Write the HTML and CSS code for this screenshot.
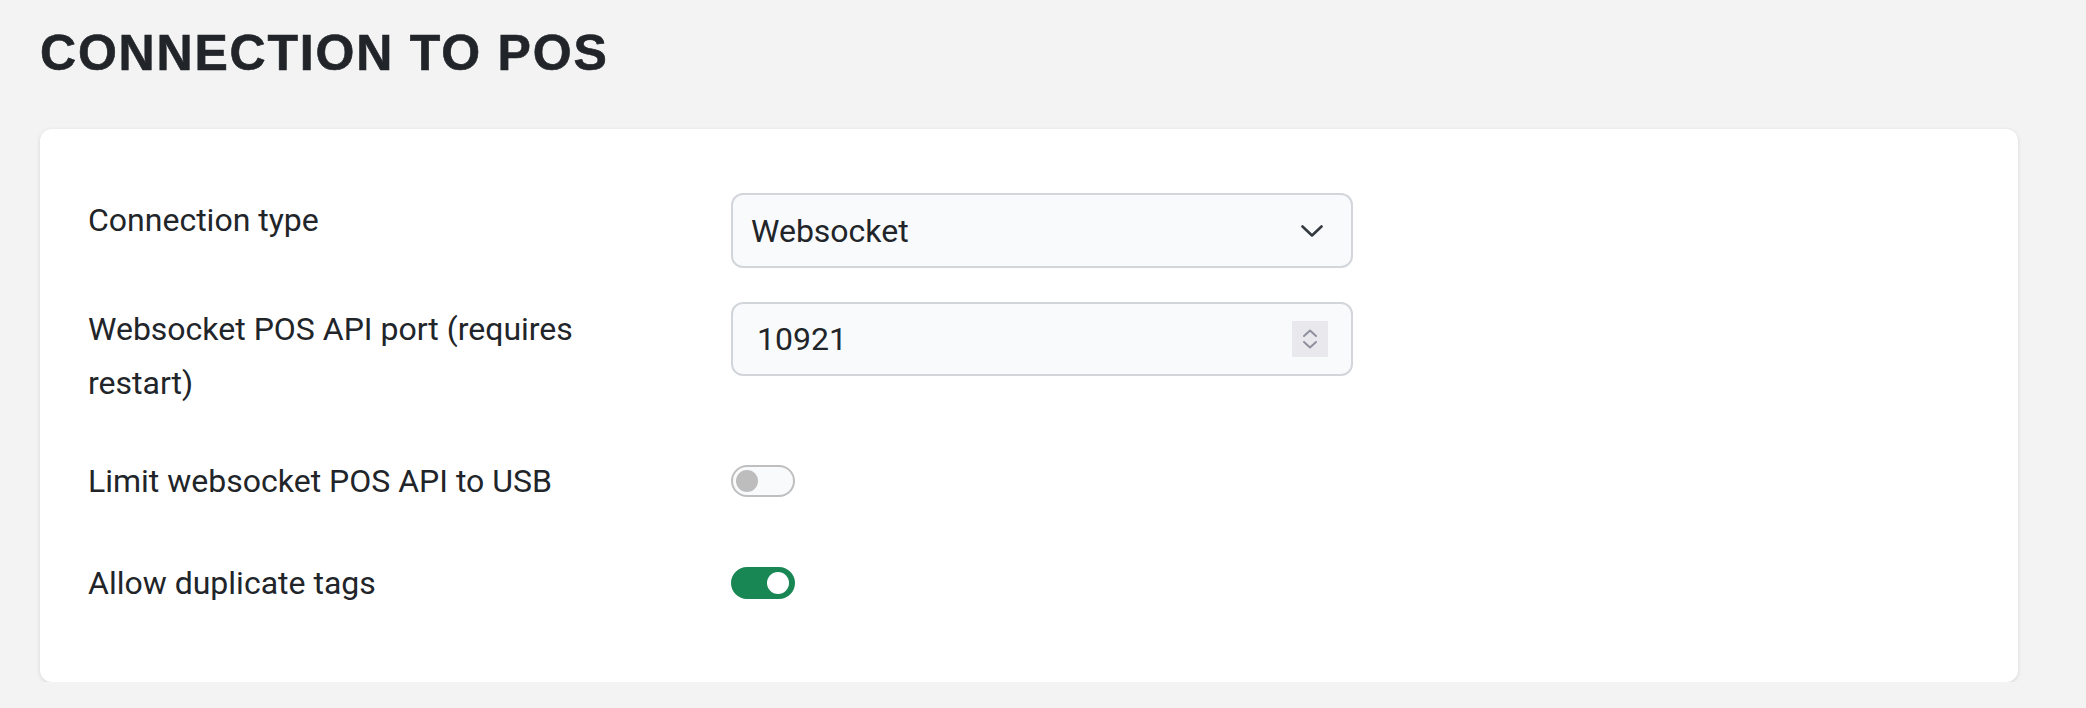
FILE: index.html
```html
<!DOCTYPE html>
<html lang="en">
<head>
<meta charset="utf-8">
<title>Connection to POS</title>
<link rel="stylesheet" href="styles.css">
</head>
<body>
<main class="page">
  <h1 class="title">CONNECTION TO POS</h1>
  <section class="card">
    <div class="form">
      <div class="field field--input">
        <label class="label">Connection type</label>
        <div class="control select">
          <span class="control-text">Websocket</span>
          <svg class="chevron" width="22" height="12" viewBox="0 0 22 12" aria-hidden="true">
            <path d="M1.5 1.5 L11 10.5 L20.5 1.5" fill="none" stroke="#343a40" stroke-width="2.6" stroke-linecap="round" stroke-linejoin="round"/>
          </svg>
        </div>
      </div>
      <div class="field field--input">
        <label class="label">Websocket POS API port (requires restart)</label>
        <div class="control number">
          <span class="control-text">10921</span>
          <span class="spinner" aria-hidden="true">
            <svg width="16" height="24" viewBox="0 0 16 24">
              <path d="M2 9 L8 3.5 L14 9" fill="none" stroke="#8f8f9d" stroke-width="2" stroke-linecap="round" stroke-linejoin="round"/>
              <path d="M2 15 L8 20.5 L14 15" fill="none" stroke="#8f8f9d" stroke-width="2" stroke-linecap="round" stroke-linejoin="round"/>
            </svg>
          </span>
        </div>
      </div>
      <div class="field field--switch">
        <label class="label">Limit websocket POS API to USB</label>
        <div class="switch"><span class="knob"></span></div>
      </div>
      <div class="field field--switch">
        <label class="label">Allow duplicate tags</label>
        <div class="switch switch--on"><span class="knob"></span></div>
      </div>
    </div>
  </section>
</main>
</body>
</html>
```
FILE: styles.css
```css
* { box-sizing: border-box; }

html, body {
  margin: 0;
  background: #f3f3f3;
}

body {
  font-family: Roboto, "Noto Sans", "Liberation Sans", sans-serif;
  color: #212529;
}

.page {
  padding: 23px 68px 0 40px;
}

.title {
  margin: 0;
  font-family: "Liberation Sans", Arial, sans-serif;
  font-weight: 700;
  font-size: 50px;
  line-height: 60px;
  letter-spacing: 1.8px;
  -webkit-text-stroke: 0.6px #212529;
  color: #212529;
}

.card {
  margin-top: 46px;
  background: #ffffff;
  border-radius: 12px;
  box-shadow: 0 1px 4px rgba(0, 0, 0, 0.12);
  padding: 64px 48px 72px 48px;
}

.form {
  display: flex;
  flex-direction: column;
}

.field {
  display: grid;
  grid-template-columns: 560px 622px;
  column-gap: 83px;
  align-items: start;
}

.field--input + .field--input { margin-top: 34px; }
.field--switch { margin-top: 44px; align-items: center; }
.field--switch + .field--switch { margin-top: 48px; }

.label {
  font-size: 32px;
  line-height: 54px;
  color: #212529;
}

.control {
  display: flex;
  align-items: center;
  justify-content: space-between;
  background: #f9fafb;
  border: 2px solid #d2d6db;
  border-radius: 12px;
  font-size: 32px;
  color: #212529;
}

.select {
  height: 75px;
  padding: 0 28px 0 18px;
}

.number {
  height: 74px;
  padding: 0 23px 0 24px;
}

.chevron { display: block; }

.spinner {
  width: 36px;
  height: 36px;
  background: #e9e9ed;
  display: flex;
  align-items: center;
  justify-content: center;
}

.spinner svg { display: block; }

.switch {
  width: 64px;
  height: 32px;
  border-radius: 16px;
  border: 2px solid #bfbfbf;
  background: #f9fafb;
  display: flex;
  align-items: center;
  padding-left: 3px;
}

.knob {
  width: 22px;
  height: 22px;
  border-radius: 50%;
  background: #bdbdbd;
}

.switch--on {
  background: #198754;
  border-color: #198754;
  justify-content: flex-end;
  padding-left: 0;
  padding-right: 4px;
}

.switch--on .knob { background: #ffffff; }
```
